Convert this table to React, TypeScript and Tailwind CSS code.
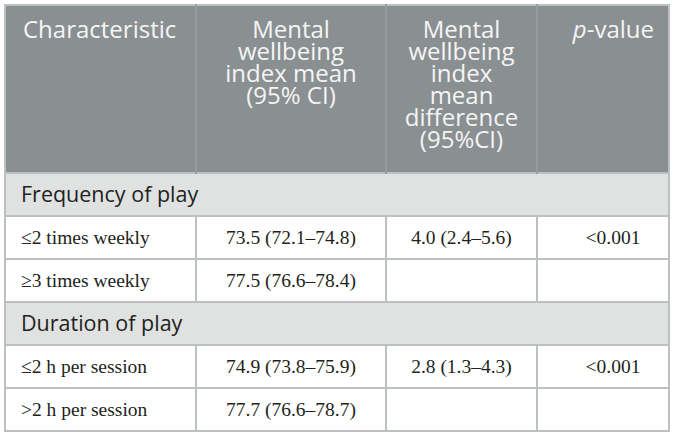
import React from "react";

type Row = { label: string; mean: string; diff: string; p: string };

const sections: { title: string; rows: Row[] }[] = [
  {
    title: "Frequency of play",
    rows: [
      { label: "≤2 times weekly", mean: "73.5 (72.1–74.8)", diff: "4.0 (2.4–5.6)", p: "<0.001" },
      { label: "≥3 times weekly", mean: "77.5 (76.6–78.4)", diff: "", p: "" },
    ],
  },
  {
    title: "Duration of play",
    rows: [
      { label: "≤2 h per session", mean: "74.9 (73.8–75.9)", diff: "2.8 (1.3–4.3)", p: "<0.001" },
      { label: ">2 h per session", mean: "77.7 (76.6–78.7)", diff: "", p: "" },
    ],
  },
];

const sans = "font-['Open_Sans',sans-serif]";
const serif = "font-['Liberation_Serif',serif]";

export default function App() {
  return (
    <div className="w-[673px] h-[436px] bg-white pt-[4px] pl-[4px]">
      <table className="w-[664px] table-fixed border-collapse border-2 border-[#bcc0c0]">
        <colgroup>
          <col className="w-[191px]" />
          <col className="w-[190px]" />
          <col className="w-[151px]" />
          <col className="w-[132px]" />
        </colgroup>
        <thead>
          <tr className={`bg-[#8a8f91] text-[#f4f5f5] text-[24px] leading-[22px] ${sans}`}>
            <th className="h-[168px] align-top text-left font-normal pl-[17px] pt-[12px] border-r-2 border-[#989c9e]">
              Characteristic
            </th>
            <th className="align-top text-center font-normal px-[22px] pt-[12px] border-r-2 border-[#989c9e]">
              Mental wellbeing index mean (95% CI)
            </th>
            <th className="align-top text-center font-normal px-[14px] pt-[12px] border-r-2 border-[#989c9e]">
              Mental wellbeing index mean difference (95%CI)
            </th>
            <th className="align-top text-right font-normal pr-[14px] pt-[12px]">
              <span className="italic">p</span>-value
            </th>
          </tr>
        </thead>
        <tbody>
          {sections.map((s) => (
            <React.Fragment key={s.title}>
              <tr className="bg-[#e0e2e2]">
                <td
                  colSpan={4}
                  className={`h-[43px] pl-[15px] text-[21.5px] text-[#231f20] border-y-2 border-[#bcc0c0] ${sans}`}
                >
                  {s.title}
                </td>
              </tr>
              {s.rows.map((r) => (
                <tr key={r.label} className={`text-[19.5px] text-[#231f20] ${serif}`}>
                  <td className="h-[43px] pl-[15px] border-2 border-[#bcc0c0]">{r.label}</td>
                  <td className="text-center border-2 border-[#bcc0c0]">{r.mean}</td>
                  <td className="text-center border-2 border-[#bcc0c0]">{r.diff}</td>
                  <td className="text-center pl-[20px] border-2 border-[#bcc0c0]">{r.p}</td>
                </tr>
              ))}
            </React.Fragment>
          ))}
        </tbody>
      </table>
    </div>
  );
}
